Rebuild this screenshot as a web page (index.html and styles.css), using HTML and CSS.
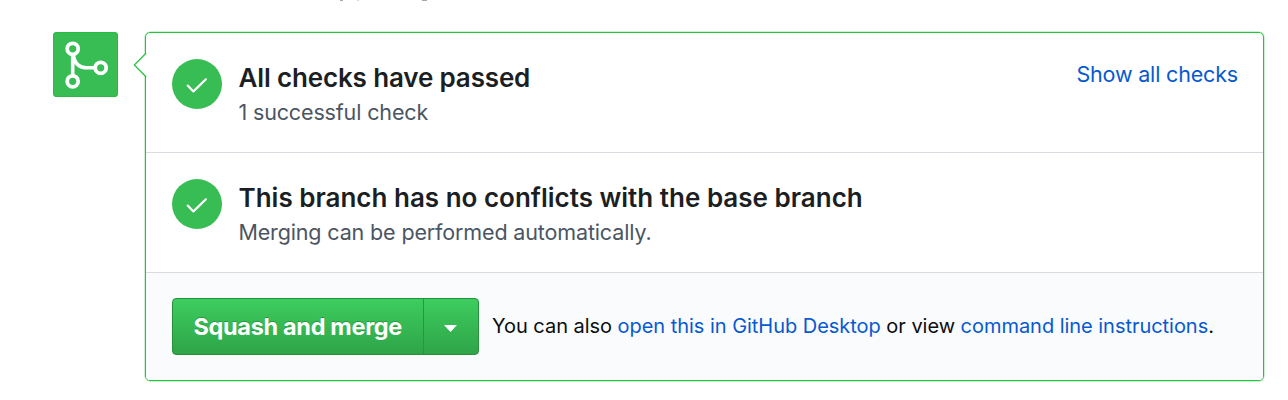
FILE: index.html
```html
<!DOCTYPE html>
<html lang="en">
<head>
<meta charset="utf-8">
<title>Merge status</title>
<link rel="stylesheet" href="styles.css">
</head>
<body>
<div class="remnant"><i class="tail tail-y"></i><i class="tail tail-p"></i><i class="tail tail-g"></i></div>
<main class="merge">
  <div class="avatar">
    <svg width="65" height="65" viewBox="0 0 65 65" fill="none" stroke="#fff">
      <g stroke-width="3.8"><circle cx="19.7" cy="16.8" r="5.5"/><circle cx="19.7" cy="49.3" r="5.5"/><circle cx="47.7" cy="35.8" r="5.5"/></g>
      <path d="M19.7 22v22M20.2 22c1 9 6 13.8 14 13.8h9" stroke-width="3.6"/>
    </svg>
  </div>
  <section class="panel">
    <svg class="pointer" width="14" height="26" viewBox="0 0 14 26"><path d="M13.2 1L1.3 13l11.9 12" fill="#fff" stroke="#22c43a" stroke-width="1.2"/></svg>
    <div class="row">
      <span class="status"><svg width="50" height="50" viewBox="0 0 50 50"><path d="M15.7 26.6l5.7 5.8L33.9 20.3" fill="none" stroke="#fff" stroke-width="2.2" stroke-linecap="round" stroke-linejoin="round"/></svg></span>
      <div class="copy"><h3 class="title title-checks">All checks have passed</h3><p class="sub">1 successful check</p></div>
      <a class="link toggle">Show all checks</a>
    </div>
    <div class="row">
      <span class="status"><svg width="50" height="50" viewBox="0 0 50 50"><path d="M15.7 26.6l5.7 5.8L33.9 20.3" fill="none" stroke="#fff" stroke-width="2.2" stroke-linecap="round" stroke-linejoin="round"/></svg></span>
      <div class="copy"><h3 class="title">This branch has no conflicts with the base branch</h3><p class="sub">Merging can be performed automatically.</p></div>
    </div>
    <div class="footer">
      <div class="buttons"><span class="main-button">Squash and merge</span><span class="caret"><svg width="13" height="7" viewBox="0 0 13 7"><path d="M0 0h13L6.5 7z" fill="#fff"/></svg></span></div>
      <p class="note">You can also <a class="link">open this in GitHub Desktop</a> or view <a class="link">command line instructions</a>.</p>
    </div>
  </section>
</main>
</body>
</html>
```
FILE: styles.css
```css
* { box-sizing: border-box; }
body { margin: 0; width: 1288px; height: 400px; background: #fff; font-family: Inter, "Liberation Sans", sans-serif; overflow: hidden; white-space: nowrap; }
.remnant { height: 32px; padding-left: 340px; display: flex; }
.tail { height: 1px; background: #a5a8ad; }
.tail-y { width: 3px; }
.tail-p { width: 2px; margin-left: 14px; background: #d8dadd; }
.tail-g { width: 5px; margin-left: 63px; }
.merge { display: flex; padding-left: 53px; gap: 27px; }
.avatar { width: 65px; height: 65px; border-radius: 4px; background: #37bd54; box-shadow: inset 0 0 0 1px #2abb43; }
.avatar svg { display: block; }
.panel { position: relative; width: 1119px; height: 349px; border: 1px solid #22c43a; border-radius: 5px; box-shadow: 0 0 0 .5px #9be3a7; }
.pointer { position: absolute; left: -13px; top: 19px; }
.row { height: 120px; display: flex; padding: 25px 25px 0 26px; border-bottom: 1px solid #d9dde1; }
.status { width: 50px; height: 50px; border-radius: 50%; background: #37bd54; flex: none; margin-left: -.5px; margin-top: .5px; }
.status svg { display: block; }
.copy { flex: 1; margin-left: 17.5px; }
.title { margin: 3px 0 0; font-size: 26px; line-height: 34px; font-weight: 600; color: #1b1f23; position: relative; left: -.5px; }
.title-checks { letter-spacing: -.15px; }
.sub { margin: 1px 0 0 -.6px; font-size: 21.5px; line-height: 32px; letter-spacing: -.14px; color: #4b5563; }
.link { color: #0759d0; }
.toggle { font-size: 21.5px; line-height: 32px; letter-spacing: -.17px; }
.footer { height: 107px; display: flex; align-items: center; padding-left: 26px; background: #fafbfd; border-radius: 0 0 4px 4px; }
.buttons { display: flex; width: 307px; height: 57px; border: 1px solid #25923b; border-radius: 4px; background: linear-gradient(#3dcd5e, #2fa448); color: #fff; }
.main-button { width: 251px; border-right: 1px solid #299443; padding-left: 20.5px; font-size: 23.5px; font-weight: 700; line-height: 55px; letter-spacing: -.33px; text-shadow: 0 -1px 0 #259b3e; }
.caret { flex: 1; display: flex; align-items: center; justify-content: center; padding: 3px 1px 0 0; }
.note { margin: 0 0 0 13px; font-size: 20px; line-height: 30px; letter-spacing: -.035px; color: #0b0d0f; position: relative; top: -.5px; }
```
